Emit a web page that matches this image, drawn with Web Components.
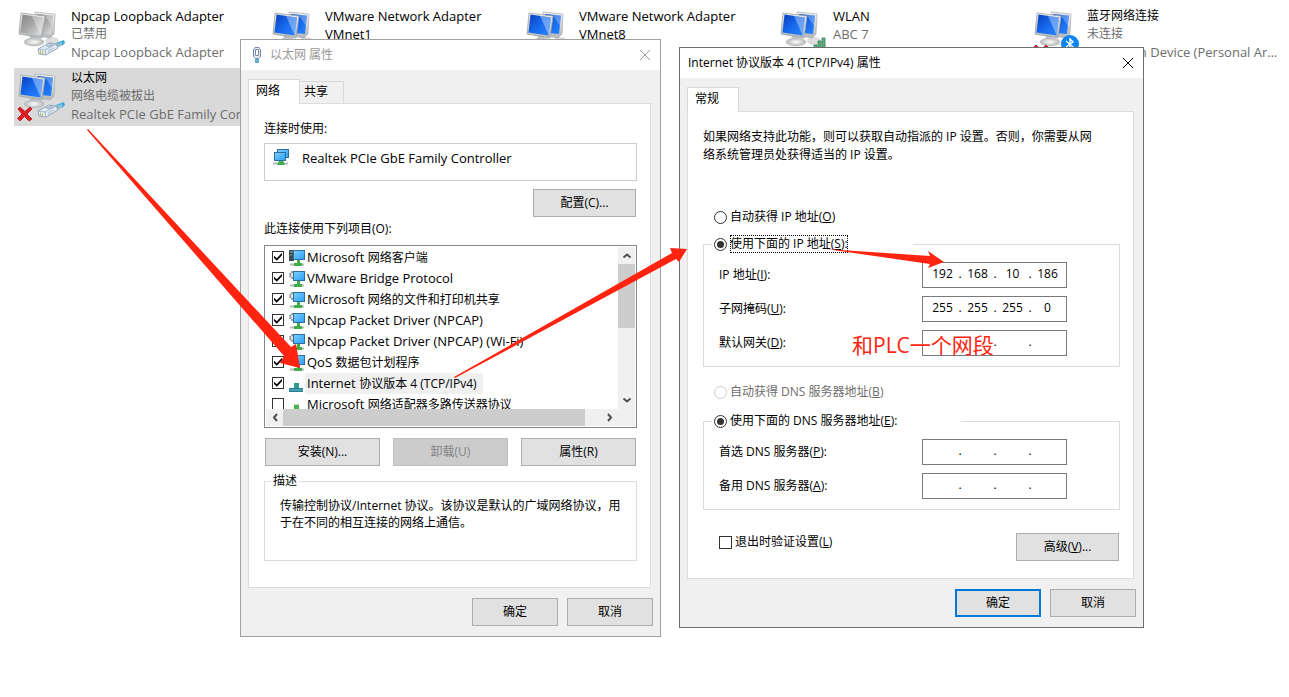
<!DOCTYPE html>
<html lang="zh-CN">
<head>
<meta charset="utf-8">
<title>网络连接</title>
<style>
  html, body { margin: 0; min-height: 100%; background: #fff; }
  body { font: 12px/18px "Open Sans", "Noto Sans CJK SC", sans-serif; color: #000; }
</style>
</head>
<body>
<network-desktop></network-desktop>

<script>
function define(name, html, setup) {
  const template = document.createElement('template');
  template.innerHTML = html;
  customElements.define(name, class extends HTMLElement {
    constructor() {
      super();
      this.attachShadow({ mode: 'open' }).append(template.content.cloneNode(true));
    }
    connectedCallback() {
      if (setup && !this.ready) { this.ready = true; setup.call(this, this.shadowRoot); }
    }
  });
}

/* ---------- icons ---------- */

const screens = (light, mid, dark) => `
  <defs>
    <linearGradient id="s" x1="0" y1="0" x2="1" y2="1"><stop offset="0" stop-color="${dark}"/><stop offset=".5" stop-color="${mid}"/><stop offset="1" stop-color="${light}"/></linearGradient>
    <linearGradient id="f" x1="0" y1="0" x2="0" y2="1"><stop offset="0" stop-color="#eef0f0"/><stop offset="1" stop-color="#b4b8ba"/></linearGradient>
    <radialGradient id="b"><stop offset="0" stop-color="#fff"/><stop offset="1" stop-color="#b4b6b8"/></radialGradient>
  </defs>
  <ellipse cx="38" cy="35" rx="7" ry="4" fill="#dcdcdc"/>
  <path d="M21 6 41 8 40 28 36 32 25 30Z" fill="url(#f)" stroke="#a9adb0" stroke-width=".7"/>
  <path d="M23 8 39 9.500 37 28 27 27Z" fill="url(#s)"/>
  <path d="M30 8 39 9.500 38 20Z" fill="#fff" opacity=".28"/>
  <path d="M16 29 22 30 23 37 15 36Z" fill="#c3c6c8"/>
  <ellipse cx="20" cy="36" rx="10" ry="4" fill="url(#b)" stroke="#babcbe" stroke-width=".5"/>
  <path d="M7 7 31 10 28 32 5 28Z" fill="url(#f)" stroke="#9ea3a7" stroke-width=".8"/>
  <path d="M8.500 8.500 29 11.500 26.500 29.500 6.500 26.500Z" fill="url(#s)"/>
  <path d="M18 10 29 11.500 26.500 29Z" fill="#fff" opacity=".35"/>`;

const plug = `
  <path d="M42 37 50 34 51 37 49 39 44 41Z" fill="#3fa9d6"/>
  <path d="M41 38 48 36 48 39 43 42Z" fill="#8fc0d6"/>
  <path d="M24 43 35 37 42 38 44 42 32 49 25 48Z" fill="#e3ecf3" stroke="#7f97b0" stroke-width=".8"/>
  <path d="M24 43 31 44 32 49M31 44 42 38" fill="none" stroke="#8aa0b7" stroke-width=".7"/>
  <path d="M32 40 36 38 39 39 35 41Z" fill="#b9cad9" stroke="#7f97b0" stroke-width=".4"/>
  <path d="M26.500 44.500v3.500M28.500 45v3.500" stroke="#c4b777"/>
  <path d="M34 44 40 41 40 43 34 47Z" fill="#c0d0dd"/>`;

const cross = `
  <path d="M6 39 11 43.500 16 39 18 41 13 46 18 51 15 53 10.500 48.500 6 53 3.500 50.500 8 46 4 41Z" fill="#e11a22" stroke="#a90f16" stroke-width=".7"/>`;

define('adapter-icon', `
<style>:host { display: block; } svg { display: block; }</style>
<svg width="57" height="58" viewBox="0 0 57 58" aria-hidden="true"></svg>`, function (root) {
  const kind = this.getAttribute('kind');
  const off = kind === 'disabled';
  let art = off ? screens('#e3e3e3', '#a8a8a8', '#858585') : screens('#2a86ff', '#1769ec', '#0a3fbd');
  if (off || kind === 'unplugged') art += plug;
  if (kind === 'unplugged' || kind === 'bluetooth') art += cross;
  if (kind === 'wireless') art += `
    <path d="M34 42h3v7h-3zM38 39h3v10h-3zM42 35h3v14h-3zM46 32h3v17h-3z" fill="#5fb383" stroke="#27784b" stroke-width=".8"/>`;
  if (kind === 'bluetooth') art += `
    <circle cx="40" cy="38" r="9" fill="#0a84f5"/>
    <path d="M36 35 43 41 40 44V33L43 36 36 41" fill="none" stroke="#fff" stroke-width="1.400"/>`;
  root.querySelector('svg').innerHTML = art;
});

define('component-icon', `
<style>:host { display: block; flex: none; } svg { display: block; }</style>
<svg width="16" height="16" viewBox="0 0 16 16" aria-hidden="true"></svg>`, function (root) {
  const kind = this.getAttribute('kind');
  const blue = `<defs><linearGradient id="g" x1="0" y1="0" x2="1" y2="1"><stop offset="0" stop-color="#7fd0ff"/><stop offset="1" stop-color="#2a9df4"/></linearGradient></defs>`;
  const node = `<path d="M1 14.500h14" stroke="#b5b9bc" stroke-width="2"/><path d="M8 10h3v3h2v3H5v-3h3z" fill="#3fae49"/>`;
  const screen = `<rect x="4.500" y=".5" width="11" height="9" fill="url(#g)" stroke="#2c6f9f"/>`;
  const art = {
    adapter: `${blue}<path d="M0 14.500h15" stroke="#b5b9bc" stroke-width="2"/><path d="M6 12h4l2 4H4z" fill="#3fae49"/>
      <rect x="4.500" y=".5" width="11" height="8" fill="url(#g)" stroke="#2c6f9f"/><rect x="1.500" y="3.500" width="11" height="8" fill="url(#g)" stroke="#2c6f9f"/>`,
    client: `${blue}<path d="M0 0h5v11H0z" fill="#3d4a50"/><path d="M1 2h3M1 5h2" stroke="#9aa7ad"/>${node}${screen}`,
    service: `${blue}<circle cx="4" cy="4" r="3" fill="#e4e7e9" stroke="#7d878c" stroke-width="2" stroke-dasharray="1.600 .8"/>${node}${screen}`,
    protocol: `<path d="M5 7h5v5h4v4H0v-4h5z" fill="#20838f"/><path d="M5 7h5v5H5z" fill="#2f9c90"/><path d="M0 14h14" stroke="#7db7d8"/>`,
    multiplexor: `<path d="M5 7h5v9H5z" fill="#4db153"/><path d="M5 7h5v1H5z" fill="#bfe3bf"/>`,
  };
  root.querySelector('svg').innerHTML = art[kind];
});

/* ---------- controls ---------- */

define('adapter-item', `
<style>
  :host { display: flex; height: 58px; min-width: 0; }
  :host([selected]) { background: #d9d9d9; }
  adapter-icon { flex: none; width: 57px; }
  div { min-width: 0; padding-top: 1px; color: #6d6d6d; font-size: 13px; }
  ::slotted(*) { display: block; overflow: hidden; text-overflow: ellipsis; white-space: nowrap; }
  ::slotted([slot=name]) { color: #000; white-space: normal; }
  ::slotted(.zh) { font-size: 12px; }
</style>
<adapter-icon></adapter-icon>
<div><slot name="name"></slot><slot></slot></div>`, function (root) {
  const old = root.querySelector('adapter-icon');
  const icon = document.createElement('adapter-icon');
  icon.setAttribute('kind', this.getAttribute('kind'));
  old.replaceWith(icon);
});

define('win-button', `
<style>
  :host { display: block; flex: none; width: 103px; height: 28px; }
  :host([size=small]) { width: 86px; }
  :host([size=wide]) { width: 115px; }
  button { box-sizing: border-box; width: 100%; height: 100%; margin: 0; padding: 0; border: 1px solid #adadad; border-radius: 0; background: #e1e1e1; color: #000; font: inherit; }
  :host([default]) button { border: 2px solid #0078d7; }
  button:disabled { background: #ccc; border-color: #bfbfbf; color: #838383; }
</style>
<button type="button"><slot></slot></button>`, function (root) {
  root.querySelector('button').disabled = this.hasAttribute('disabled');
});

const choiceStyle = `
  label { display: flex; align-items: center; gap: 3px; white-space: nowrap; }
  input { appearance: none; position: relative; box-sizing: border-box; flex: none; width: 13px; height: 13px; margin: 0; border: 1px solid #333; background: #fff; }
  input[type=radio] { border-radius: 50%; }
  input:disabled { border-color: #ccc; }
  input:disabled + span { color: #6d6d6d; }
  input::before { content: ""; position: absolute; inset: 0; }
  input[type=radio]:checked::before { inset: 2px; border-radius: 50%; background: #333; }
  input[type=checkbox]:checked::before { background: #000; clip-path: polygon(10% 42%, 38% 68%, 90% 12%, 90% 38%, 38% 92%, 10% 66%); }`;

define('win-choice', `
<style>
  :host { display: block; }
  ${choiceStyle}
  :host([focused]) span { outline: 1px dotted #000; outline-offset: -1px; }
</style>
<label><input><span><slot></slot></span></label>`, function (root) {
  const input = root.querySelector('input');
  input.type = this.getAttribute('type');
  input.checked = this.hasAttribute('checked');
  input.disabled = this.hasAttribute('disabled');
});

define('component-row', `
<style>
  :host { display: flex; align-items: center; height: 21px; padding-left: 6px; white-space: nowrap; font-size: 13px; }
  ${choiceStyle}
  input { width: 12px; height: 12px; margin-bottom: 2px; }
  label { gap: 5px; }
  .icon { display: flex; }
  .name { margin-left: -5px; padding: 0 6px 0 2px; line-height: 21px; }
  :host([selected]) .name { background: #f0f0f0; }
  ::slotted(.zh) { font-size: 12px; }
</style>
<label><input type="checkbox"><span class="icon"></span><span class="name"><slot></slot></span></label>`, function (root) {
  root.querySelector('input').checked = this.hasAttribute('checked');
  const icon = document.createElement('component-icon');
  icon.setAttribute('kind', this.getAttribute('kind'));
  root.querySelector('.icon').append(icon);
});

define('win-scrollbar', `
<style>
  :host { display: flex; background: #f0f0f0; }
  :host([vertical]) { flex-direction: column; }
  button { display: grid; place-items: center; flex: none; width: 17px; height: 17px; margin: 0; padding: 0; border: 0; background: none; }
  svg { fill: none; stroke: #505050; stroke-width: 2; }
  .track { flex: 1; display: flex; }
  :host([vertical]) .track { flex-direction: column; }
  .thumb { background: #cdcdcd; }
  .back svg { transform: rotate(180deg); }
  :host([vertical]) svg { transform: rotate(90deg); }
  :host([vertical]) .back svg { transform: rotate(-90deg); }
  :host([vertical]) .thumb { flex: 0 0 50%; }
  :host(:not([vertical])) .thumb { flex: 0 0 95%; }
</style>
<button class="back" type="button" tabindex="-1"><svg width="8" height="9"><path d="M2 1 5 4.500 2 8"/></svg></button>
<div class="track"><div class="thumb"></div></div>
<button type="button" tabindex="-1"><svg width="8" height="9"><path d="M2 1 5 4.500 2 8"/></svg></button>`);

define('component-list', `
<style>
  :host { display: grid; grid-template: 162px 17px / 1fr 17px; border: 1px solid #828790; padding: 1px; background: #fff; }
  .rows { overflow: hidden; }
  .corner { background: #f0f0f0; }
</style>
<div class="rows"><slot></slot></div>
<win-scrollbar vertical></win-scrollbar>
<win-scrollbar></win-scrollbar>
<div class="corner"></div>`);

define('ip-field', `
<style>
  :host { display: flex; align-items: center; height: 26px; }
  label { flex: 0 0 203px; }
  .box { box-sizing: border-box; display: flex; width: 145px; height: 26px; padding: 0 4px 0 5px; border: 1px solid #7a7a7a; background: #fff; line-height: 22px; }
  input { box-sizing: border-box; width: 29px; height: 22px; margin: 0; padding: 0; border: 0; background: none; color: inherit; font: inherit; text-align: center; outline: 0; }
  .box span { width: 6px; text-align: center; }
</style>
<label for="a"><slot></slot></label>
<div class="box"><input id="a"><span>.</span><input><span>.</span><input><span>.</span><input></div>`, function (root) {
  const parts = (this.getAttribute('value') || '').split('.');
  root.querySelectorAll('input').forEach((input, i) => {
    input.value = parts[i] || '';
    if (i) input.setAttribute('aria-labelledby', 'a');
  });
});

define('group-box', `
<style>
  :host { display: block; }
  fieldset { box-sizing: border-box; min-width: 0; margin: 0; padding: 0; border: 1px solid #dcdcdc; }
  legend { box-sizing: border-box; margin-left: var(--legend-inset, 6px); padding: 0 2px; width: var(--legend-width, auto); line-height: 18px; }
</style>
<fieldset><legend><slot name="legend"></slot></legend><slot></slot></fieldset>`);

define('tab-item', `
<style>
  :host { display: block; height: 21px; margin-top: 2px; border: 1px solid #d9d9d9; border-bottom: 0; border-left: 0; background: #f0f0f0; }
  :host([selected]) { position: relative; height: 24px; margin: 0 0 -1px; border-left: 1px solid #d9d9d9; background: #fff; }
  button { display: block; height: 20px; margin: 0; padding: 0 15px 0 4px; border: 0; background: none; color: inherit; font: inherit; }
  :host([selected]) button { padding: 1px 19px 0 7px; }
</style>
<button type="button" role="tab"><slot></slot></button>`);

define('win-dialog', `
<style>
  :host { display: block; box-sizing: border-box; border: 1px solid #6e6e6e; background: #f0f0f0; }
  :host([inactive]) { border-color: #a0a0a0; }
  header { display: flex; align-items: center; height: 30px; padding-left: 8px; background: #fff; }
  h1 { flex: 1; margin: 0; font: inherit; }
  :host([inactive]) h1 { color: #999; }
  :host([inactive]) svg.x { stroke: #999; }
  .close { display: grid; place-items: center; width: 30px; height: 30px; margin: 0; padding: 0; border: 0; background: none; }
  .x { fill: none; stroke: #000; }
  .tabs { display: flex; padding: 9px 7px 0; }
  .page { margin: 0 9px 0 7px; border: 1px solid #dcdcdc; background: #fff; }
  footer { display: flex; justify-content: flex-end; gap: 9px; padding: 10px 7px; }
</style>
<header><slot name="icon"></slot><h1><slot name="title"></slot></h1>
<button class="close" type="button" aria-label="关闭"><svg class="x" width="12" height="12"><path d="M1 1 11 11M11 1 1 11"/></svg></button></header>
<div class="tabs" role="tablist"><slot name="tab"></slot></div>
<div class="page"><slot></slot></div>
<footer><slot name="action"></slot></footer>`);

/* ---------- windows ---------- */

define('ethernet-properties', `
<style>
  :host { display: block; }
  .icon { margin-right: 5px; }
  .body { padding: 16px 13px 26px 15px; }
  .device { display: flex; gap: 13px; height: 20px; margin: 5px 0 8px; padding: 5px 8px 11px; border: 1px solid #ccc; font-size: 13px; }
  .right { display: flex; justify-content: flex-end; margin-right: 1px; }
  .label { margin: 3px 0 7px; }
  .row { display: flex; justify-content: space-between; margin: 10px 1px 6px; }
  p { height: 63px; margin: 0; padding: 7px 13px 0 15px; line-height: 17px; }
</style>
<win-dialog inactive>
  <svg class="icon" slot="icon" width="16" height="18" aria-hidden="true">
    <path d="M7 13v4M9 13v4" stroke="#2d94bf" stroke-width="1.500"/>
    <path d="M4.500 3.500 6 1.500h4l1.500 2v7l-2 2h-3l-2-2z" fill="#e6ecf4" stroke="#7687a5"/>
    <path d="M6.500 3.500h3v6h-3z" fill="#fff" stroke="#7687a5"/>
  </svg>
  <span slot="title">以太网 属性</span>
  <tab-item slot="tab" selected>网络</tab-item>
  <tab-item slot="tab">共享</tab-item>
  <div class="body">
    <div>连接时使用:</div>
    <div class="device"><component-icon kind="adapter"></component-icon><span>Realtek PCIe GbE Family Controller</span></div>
    <div class="right"><win-button>配置(C)...</win-button></div>
    <div class="label">此连接使用下列项目(O):</div>
    <component-list>
      <component-row kind="client" checked>Microsoft <span class="zh">网络客户端</span></component-row>
      <component-row kind="service" checked>VMware Bridge Protocol</component-row>
      <component-row kind="service" checked>Microsoft <span class="zh">网络的文件和打印机共享</span></component-row>
      <component-row kind="service" checked>Npcap Packet Driver (NPCAP)</component-row>
      <component-row kind="service" checked>Npcap Packet Driver (NPCAP) (Wi-Fi)</component-row>
      <component-row kind="service" checked>QoS <span class="zh">数据包计划程序</span></component-row>
      <component-row kind="protocol" checked selected>Internet <span class="zh">协议版本 4 (TCP/IPv4)</span></component-row>
      <component-row kind="multiplexor">Microsoft <span class="zh">网络适配器多路传送器协议</span></component-row>
    </component-list>
    <div class="row">
      <win-button size="wide">安装(N)...</win-button>
      <win-button size="wide" disabled>卸载(U)</win-button>
      <win-button size="wide">属性(R)</win-button>
    </div>
    <group-box>
      <span slot="legend">描述</span>
      <p>传输控制协议/Internet 协议。该协议是默认的广域网络协议，用<br>于在不同的相互连接的网络上通信。</p>
    </group-box>
  </div>
  <win-button slot="action" size="small">确定</win-button>
  <win-button slot="action" size="small">取消</win-button>
</win-dialog>`);

define('ipv4-properties', `
<style>
  :host { display: block; }
  .body { padding: 16px 13px 17px 15px; }
  p { margin: 0 0 44px; }
  .auto { margin: 0 0 9px 11px; }
  .ip { --legend-inset: 8px; --legend-width: 201px; margin-bottom: 16px; }
  .dns { --legend-inset: 8px; --legend-width: 249px; margin: 11px 0 23px; }
  .fields { display: grid; gap: 8px; padding: 9px 0 10px 15px; }
  .end { display: flex; justify-content: space-between; padding: 0 1px 0 16px; }
</style>
<win-dialog>
  <span slot="title">Internet 协议版本 4 (TCP/IPv4) 属性</span>
  <tab-item slot="tab" selected>常规</tab-item>
  <div class="body">
    <p>如果网络支持此功能，则可以获取自动指派的 IP 设置。否则，你需要从网<br>络系统管理员处获得适当的 IP 设置。</p>
    <win-choice class="auto" type="radio">自动获得 IP 地址(<u>O</u>)</win-choice>
    <group-box class="ip">
      <win-choice slot="legend" type="radio" checked focused>使用下面的 IP 地址(<u>S</u>):</win-choice>
      <div class="fields">
        <ip-field value="192.168.10.186">IP 地址(<u>I</u>):</ip-field>
        <ip-field value="255.255.255.0">子网掩码(<u>U</u>):</ip-field>
        <ip-field>默认网关(<u>D</u>):</ip-field>
      </div>
    </group-box>
    <win-choice class="auto" type="radio" disabled>自动获得 DNS 服务器地址(<u>B</u>)</win-choice>
    <group-box class="dns">
      <win-choice slot="legend" type="radio" checked>使用下面的 DNS 服务器地址(<u>E</u>):</win-choice>
      <div class="fields">
        <ip-field>首选 DNS 服务器(<u>P</u>):</ip-field>
        <ip-field>备用 DNS 服务器(<u>A</u>):</ip-field>
      </div>
    </group-box>
    <div class="end">
      <win-choice type="checkbox">退出时验证设置(<u>L</u>)</win-choice>
      <win-button>高级(<u>V</u>)...</win-button>
    </div>
  </div>
  <win-button slot="action" size="small" default>确定</win-button>
  <win-button slot="action" size="small">取消</win-button>
</win-dialog>`);

/* ---------- desktop ---------- */

define('network-desktop', `
<style>
  :host { display: block; position: relative; min-height: 100vh; overflow: hidden; }
  .adapters { display: grid; grid-template-columns: repeat(auto-fill, 254px); gap: 4px 0; padding: 6px 0 0 14px; }
  ethernet-properties { position: absolute; left: 240px; top: 39px; width: 421px; }
  ipv4-properties { position: absolute; left: 679px; top: 47px; width: 465px; }
  .arrows { position: absolute; left: 0; top: 0; pointer-events: none; fill: #ff2410; }
  .note { position: absolute; left: 852px; top: 330px; color: #ff2410; font-size: 21px; line-height: 30px; white-space: nowrap; }
</style>
<div class="adapters">
  <adapter-item kind="disabled"><span slot="name">Npcap Loopback Adapter</span><span class="zh">已禁用</span><span>Npcap Loopback Adapter</span></adapter-item>
  <adapter-item kind="virtual"><span slot="name">VMware Network Adapter VMnet1</span></adapter-item>
  <adapter-item kind="virtual"><span slot="name">VMware Network Adapter VMnet8</span></adapter-item>
  <adapter-item kind="wireless"><span slot="name">WLAN</span><span>ABC 7</span></adapter-item>
  <adapter-item kind="bluetooth"><span slot="name" class="zh">蓝牙网络连接</span><span class="zh">未连接</span><span>Bluetooth Device (Personal Area Network)</span></adapter-item>
  <adapter-item kind="unplugged" selected><span slot="name" class="zh">以太网</span><span class="zh">网络电缆被拔出</span><span>Realtek PCIe GbE Family Controller</span></adapter-item>
</div>
<ethernet-properties></ethernet-properties>
<ipv4-properties></ipv4-properties>
<svg class="arrows" width="960" height="400" aria-hidden="true">
  <path d="M87 130 88 129 291 347 296 344 300 368 280 363 284 356Z"/>
  <path d="M454 377 672 253 670 248 687 249 679 262 676 259 455 378Z"/>
  <path d="M826 249 930 256 928 251 944 262 928 268 930 264Z"/>
</svg>
<div class="note">和PLC一个网段</div>`);
</script>
</body>
</html>
